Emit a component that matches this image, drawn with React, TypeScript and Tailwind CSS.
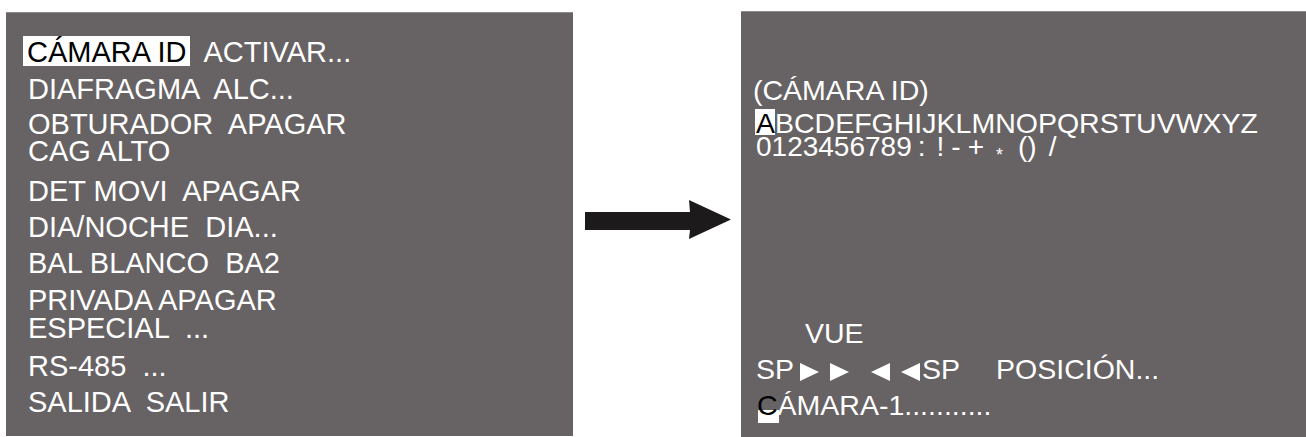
import React from 'react';

const MENU_LINES: { text: string; gap: string }[] = [
  { text: 'DIAFRAGMA  ALC...', gap: 'mt-[11px]' },
  { text: 'OBTURADOR  APAGAR', gap: 'mt-[11px]' },
  { text: 'CAG ALTO', gap: 'mt-[3px]' },
  { text: 'DET MOVI  APAGAR', gap: 'mt-[16px]' },
  { text: 'DIA/NOCHE  DIA...', gap: 'mt-[12px]' },
  { text: 'BAL BLANCO  BA2', gap: 'mt-[12px]' },
  { text: 'PRIVADA APAGAR', gap: 'mt-[13px]' },
  { text: 'ESPECIAL  ...', gap: 'mt-[4px]' },
  { text: 'RS-485  ...', gap: 'mt-[14px]' },
  { text: 'SALIDA  SALIR', gap: 'mt-[12px]' },
];

const Triangle = ({ dir }: { dir: 'right' | 'left' }) => (
  <svg viewBox="0 0 20 18" className="inline-block w-[20px] h-[18px] align-[-2px]">
    {dir === 'right' ? (
      <polygon points="1,0 20,9 1,18" fill="#ffffff" />
    ) : (
      <polygon points="19,0 0,9 19,18" fill="#ffffff" />
    )}
  </svg>
);

const MenuPanel = () => (
  <div className="mt-[12px] ml-[6px] w-[567px] h-[424px] bg-[#676364] border-t border-[#8e8b8c] pt-[23px] pl-[22px] text-white text-[29px] leading-[24px] whitespace-pre">
    <div>
      <span className="inline-block -ml-[5px] pl-[4px] pr-[3px] pt-[4px] pb-[2px] bg-white text-black leading-[24px]">
        CÁMARA ID
      </span>
      <span className="ml-[14px]">ACTIVAR...</span>
    </div>
    {MENU_LINES.map((line) => (
      <div key={line.text} className={line.gap}>
        {line.text}
      </div>
    ))}
  </div>
);

const Arrow = () => (
  <div className="w-[168px] pt-[200px] pl-[12px]">
    <svg width="146" height="40" viewBox="0 0 146 40">
      <polygon points="0,12 105,12 104,0 146,19.5 104,39 105,30 0,30" fill="#1c1a1b" />
    </svg>
  </div>
);

const IdPanel = () => (
  <div className="mt-[11px] flex-1 h-[426px] bg-[#676364] border-t border-[#8e8b8c] pt-[66px] pl-[15px] text-white text-[28.5px] leading-[24px] whitespace-pre">
    <div className="-ml-[3px]">(CÁMARA ID)</div>
    <div className="mt-[7px]">
      <span className="inline-block pl-[1px] -ml-[1px] pt-[2px] bg-white text-black leading-[24px]">A</span>
      BCDEFGHIJKLMNOPQRSTUVWXYZ
    </div>
    <div className="text-[28px]">
      0123456789
      <span className="ml-[6px]">:</span>
      <span className="ml-[11px]">!</span>
      <span className="ml-[7px]">-</span>
      <span className="ml-[7px]">+</span>
      <span className="inline-block ml-[12px] text-[18px] translate-y-[5px]">*</span>
      <span className="ml-[15px]">(</span>
      <span>)</span>
      <span className="ml-[12px]">/</span>
    </div>
    <div className="mt-[159px] pl-[49px]">VUE</div>
    <div className="mt-[12px]">
      SP
      <span className="ml-[5px]" />
      <Triangle dir="right" />
      <span className="ml-[10px]" />
      <Triangle dir="right" />
      <span className="ml-[22px]" />
      <Triangle dir="left" />
      <span className="ml-[10px]" />
      <Triangle dir="left" />
      <span className="ml-[1px]">SP</span>
      <span className="ml-[36px]">POSICIÓN...</span>
    </div>
    <div className="mt-[12px] ml-[1px]">
      <span className="relative inline-block">
        <span className="absolute left-[1px] top-[17px] w-[21px] h-[13px] bg-white" />
        <span className="relative text-black">C</span>
      </span>
      ÁMARA-1...........
    </div>
  </div>
);

export default function App() {
  return (
    <div className="flex w-[1306px] h-[437px] overflow-hidden bg-white font-['Liberation_Sans',Arial,sans-serif]">
      <MenuPanel />
      <Arrow />
      <IdPanel />
    </div>
  );
}
